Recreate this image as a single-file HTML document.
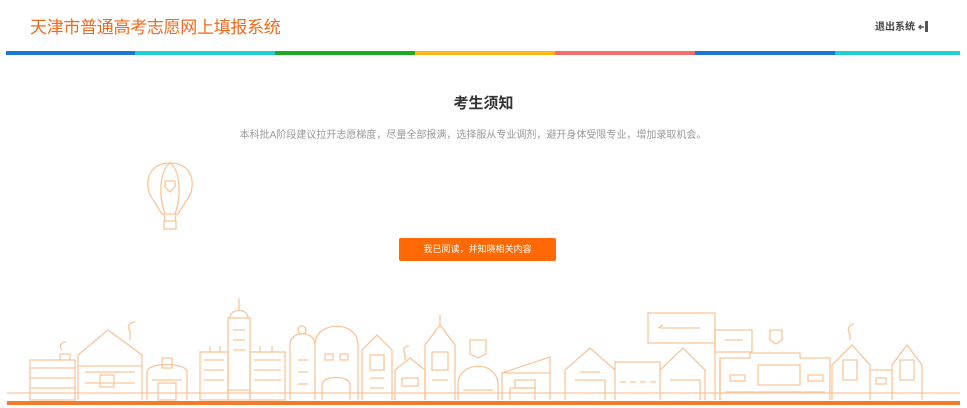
<!DOCTYPE html>
<html><head><meta charset="utf-8"><style>
*{margin:0;padding:0;box-sizing:border-box}
body{width:967px;height:408px;background:#fff;position:relative;overflow:hidden;font-family:"Liberation Sans","Noto Sans CJK SC",sans-serif}
.title{position:absolute;left:30px;top:13px;font-size:17px;color:#f26a1b;letter-spacing:-0.3px}
.exit{position:absolute;left:875px;top:18px;font-size:10px;color:#444;font-weight:bold}
.bar{position:absolute;top:51px;height:4px}
h1{position:absolute;top:92px;left:0;width:967px;text-align:center;font-size:15px;font-weight:bold;color:#333}
.sub{position:absolute;top:126px;left:0;width:946px;text-align:center;font-size:10px;color:#999}
.btn{position:absolute;left:399px;top:238px;width:157px;height:23px;background:#ff6a06;border-radius:2px;color:#fff;font-size:9px;text-align:center;line-height:23px}
svg{position:absolute;left:0;top:0}
</style></head><body>
<div class="title">天津市普通高考志愿网上填报系统</div>
<div class="exit">退出系统 <svg style="position:static;vertical-align:-2px" width="11" height="11" viewBox="0 0 11 11"><path d="M1 6h5M3 4l-2 2l2 2" stroke="#555" stroke-width="1.5" fill="none"/><rect x="7" y="0" width="3" height="11" fill="#555"/></svg></div>
<div class="bar" style="left:6px;width:129px;background:#1b78d0"></div>
<div class="bar" style="left:135px;width:140px;background:#1fd0d0"></div>
<div class="bar" style="left:275px;width:140px;background:#1eab24"></div>
<div class="bar" style="left:415px;width:140px;background:#ffb814"></div>
<div class="bar" style="left:555px;width:140px;background:#f96a6a"></div>
<div class="bar" style="left:695px;width:140px;background:#1b78d0"></div>
<div class="bar" style="left:835px;width:125px;background:#1fd0d0"></div>
<h1>考生须知</h1>
<div class="sub">本科批A阶段建议拉开志愿梯度，尽量全部报满，选择服从专业调剂，避开身体受限专业，增加录取机会。</div>
<div class="btn">我已阅读，并知晓相关内容</div>
<svg width="967" height="408" viewBox="0 0 967 408" fill="none" stroke="#f9c59a" stroke-width="1.3">
<path d="M170 163 C150 163 144 180 150 195 L162 214 L178 214 L190 195 C196 180 190 163 170 163Z"/>
<path d="M170 163 C160 170 158 195 165 214 M170 163 C180 170 182 195 175 214"/>
<path d="M165 181 h10 v6 l-5 5 l-5 -5z"/>
<path d="M164 214 L165 221 M176 214 L175 221"/>
<rect x="164" y="221" width="12" height="8"/>
<path d="M7 393 H960"/>
<rect x="30" y="360" width="45" height="40"/><path d="M30 368h45M30 378h45M30 388h45"/><path d="M60 360v-6h10v6M62 350c-4-4 0-8 4-8"/>
<path d="M78 400V355L108 330L142 355V400M78 366h64M85 372h50M85 383h50"/><rect x="100" y="375" width="14" height="12"/><path d="M130 340v-10c-4-3 0-8 5-8"/>
<path d="M147 400V372c0-10 40-10 40 0V400M152 380h30M162 358h10v10h-10z"/><rect x="158" y="383" width="18" height="17"/>
<rect x="200" y="352" width="28" height="48"/><rect x="250" y="352" width="35" height="48"/><rect x="228" y="318" width="22" height="82"/>
<path d="M239 298v12M230 318c0-10 18-10 18 0M204 360h20M204 370h20M204 380h20M254 360h27M254 370h27M254 380h27M233 330h12M233 340h12M233 350h12M210 352v-6M220 352v-6M260 352v-6M272 352v-6M228 390h22"/>
<path d="M290 400V345c0-15 25-15 25 0M315 345c0-25 43-25 43 0V400M315 345V400M298 360h10M298 372h10M298 384h10M325 360v-6h8v6zM340 360v-6h8v6z"/><path d="M322 400v-15c0-10 28-10 28 0v15"/><circle cx="302" cy="330" r="4"/>
<path d="M362 400V350l15-15l15 15V400M370 355h14v15h-14zM370 378h14M370 388h14"/>
<path d="M395 400V370l15-12l15 12V400M402 378h16v8h-16z"/><path d="M405 360v-6c-3-4 0-8 4-8"/>
<path d="M425 400V345l15-20l15 20V400M432 352h16v18h-16zM440 325v-10M432 380h16"/>
<path d="M458 400V385c0-25 40-25 40 0V400M463 390h30M470 340h16v14l-8 4l-8-4z"/>
<path d="M502 400V373l48-16V400M502 373h48M515 380h20v8h-20z"/><path d="M510 400V388h25V400"/>
<path d="M565 400V370l25-22l25 22V400M615 400V362h45V400M660 400V370l23-22l22 22V400M575 380h30v20M670 380h30v20M620 382h6M630 382h6M640 382h6M650 382h6M580 372h20"/>
<rect x="648" y="313" width="67" height="30"/><path d="M660 328h40M658 328l5-3"/><rect x="715" y="330" width="37" height="22"/><path d="M725 340h18M715 343v57M720 400V358"/>
<path d="M720 400V358h30v-5h50v5h30V400M758 365h42v20h-42zM730 375h15v6h-15zM808 375h15v6h-15zM725 392h100"/>
<path d="M770 330h12v10l-6 4l-6-4z"/>
<path d="M832 400V365l20-20l18 20V400M843 360h14v20h-14zM870 400V370h22V400M876 378h10v6h-10zM892 400V365l15-20l15 20V400M900 360h14v20h-14zM850 340v-6c-4-4 0-10 4-10"/>
</svg>
<div style="position:absolute;left:7px;top:401px;width:953px;height:4px;background:#f07c2c"></div>
</body></html>
